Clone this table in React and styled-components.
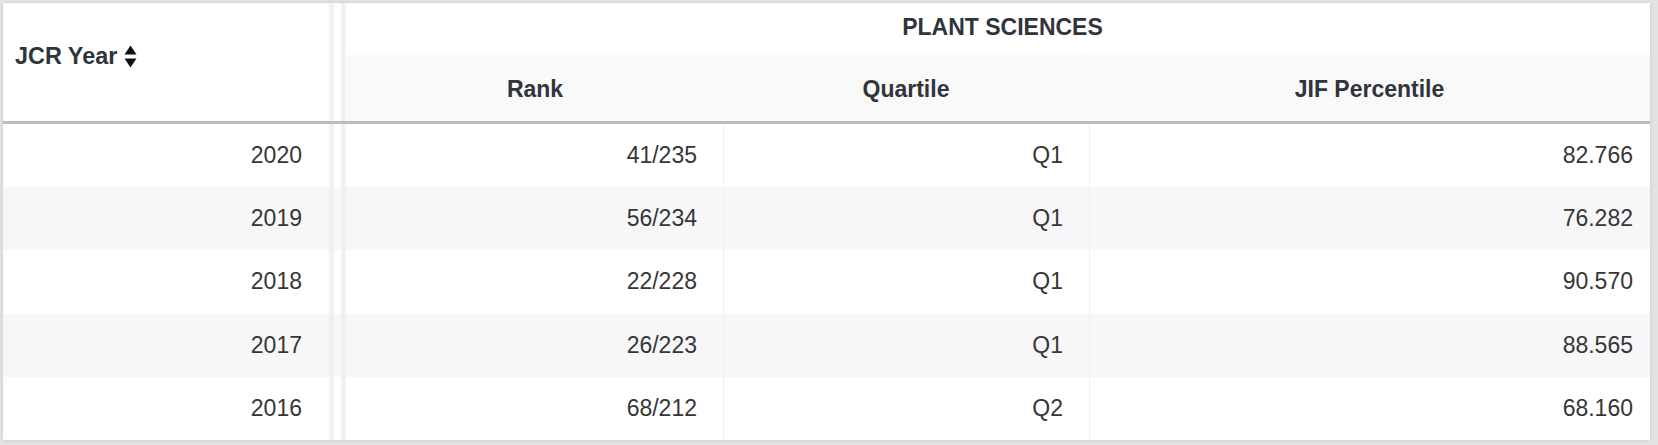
import React from "react";
import styled, { createGlobalStyle } from "styled-components";

const GlobalStyle = createGlobalStyle`
  html, body { margin: 0; padding: 0; }
  body {
    background: #e3e3e3;
    font-family: "Liberation Sans", Arial, sans-serif;
  }
`;

const Page = styled.div`
  padding: 3px 8px 5px 3px;
`;

const Card = styled.div`
  background: #fff;
  box-shadow: 0 0 4px rgba(0, 0, 0, 0.12);
`;

const COLS = "325px 19px 376px 366px 1fr";

const HeaderGrid = styled.div`
  display: grid;
  grid-template-columns: ${COLS};
  grid-template-rows: 52px 66px;
  border-bottom: 3px solid #bcbcbc;
  color: #30343b;
  font-weight: 700;
  font-size: 23px;
`;

const YearHead = styled.div`
  grid-column: 1;
  grid-row: 1 / 3;
  display: flex;
  align-items: center;
  gap: 7px;
  padding: 0 0 12px 12px;
  font-size: 23.4px;
`;

const Divider = styled.div`
  grid-column: 2;
  grid-row: ${(p) => p.$rows || "auto"};
  background-image: linear-gradient(
    to right,
    transparent 0,
    #eeeeee 3px,
    #eeeeee 4px,
    transparent 7px,
    transparent 12px,
    #eeeeee 15px,
    #eeeeee 16px,
    transparent 19px
  );
`;

const GroupHead = styled.div`
  grid-column: 3 / 6;
  grid-row: 1;
  display: flex;
  align-items: center;
  justify-content: center;
  padding: 0 0 3px 8px;
`;

const SubHead = styled.div`
  grid-row: 2;
  display: flex;
  align-items: center;
  justify-content: center;
  background: #f9f9fa;
  padding-top: 3px;
`;

const Row = styled.div`
  display: grid;
  grid-template-columns: ${COLS};
  height: 63.2px;
  background: ${(p) => (p.$alt ? "#f7f7f9" : "#ffffff")};
  color: #363636;
  font-size: 23px;
`;

const Cell = styled.div`
  display: flex;
  align-items: center;
  justify-content: flex-end;
  padding-right: ${(p) => p.$pr || 26}px;
  border-left: ${(p) => (p.$line ? "1px solid #efefef" : "none")};
`;

const SortIcon = () => (
  <svg width="13" height="23" viewBox="0 0 13 23" aria-hidden="true">
    <path d="M6.5 0.5 L12.5 9.5 L0.5 9.5 Z" fill="#111" />
    <path d="M6.5 22.5 L12.5 13.5 L0.5 13.5 Z" fill="#111" />
  </svg>
);

const rows = [
  { year: 2020, rank: "41/235", q: "Q1", jif: "82.766" },
  { year: 2019, rank: "56/234", q: "Q1", jif: "76.282" },
  { year: 2018, rank: "22/228", q: "Q1", jif: "90.570" },
  { year: 2017, rank: "26/223", q: "Q1", jif: "88.565" },
  { year: 2016, rank: "68/212", q: "Q2", jif: "68.160" },
];

export default function App() {
  return (
    <>
      <GlobalStyle />
      <Page>
        <Card>
          <HeaderGrid>
            <YearHead>
              JCR Year
              <SortIcon />
            </YearHead>
            <Divider $rows="1 / 3" />
            <GroupHead>PLANT SCIENCES</GroupHead>
            <SubHead>Rank</SubHead>
            <SubHead>Quartile</SubHead>
            <SubHead>JIF Percentile</SubHead>
          </HeaderGrid>
          {rows.map((r, i) => (
            <Row key={r.year} $alt={i % 2 === 1}>
              <Cell>{r.year}</Cell>
              <Divider />
              <Cell>{r.rank}</Cell>
              <Cell $line>{r.q}</Cell>
              <Cell $line $pr={17}>
                {r.jif}
              </Cell>
            </Row>
          ))}
        </Card>
      </Page>
    </>
  );
}
